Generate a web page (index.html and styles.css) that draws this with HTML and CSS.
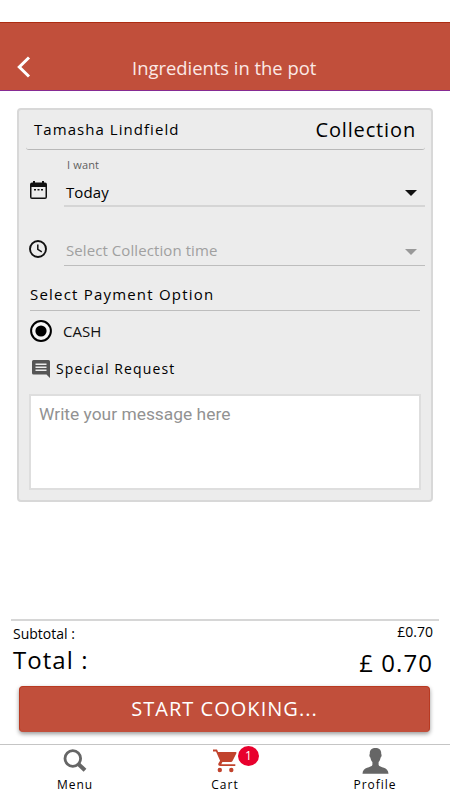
FILE: index.html
```html
<!DOCTYPE html>
<html lang="en">
<head>
<meta charset="utf-8">
<title>Ingredients in the pot</title>
<link rel="stylesheet" href="styles.css">
</head>
<body>
<div class="app">
  <header class="header">
    <svg class="back" width="14" height="22" viewBox="0 0 14 22"><path d="M12 1.500 2.300 11l9.700 9.500" fill="none" stroke="#fff" stroke-width="3"/></svg>
    <h1 class="title">Ingredients in the pot</h1>
  </header>
  <main class="card">
    <div class="customer"><span class="name">Tamasha Lindfield</span><span class="mode">Collection</span></div>
    <div class="field">
      <svg class="field-icon calendar" width="17" height="18" viewBox="0 0 17 18"><path fill="#111" fill-rule="evenodd" d="M3 0h2v1.500h7V0h2v1.500h1a2 2 0 0 1 2 2V16a2 2 0 0 1-2 2H2a2 2 0 0 1-2-2V3.500a2 2 0 0 1 2-2h1zM1.500 6v10.500h14V6zM4 8h2v1.500H4zm3.500 0h2v1.500h-2zm3.500 0h2v1.500h-2z"/></svg>
      <div class="select">
        <span class="label">I want</span>
        <span class="value">Today</span>
        <svg class="caret" width="12" height="6" viewBox="0 0 12 6"><path d="M0 0h12L6 6z" fill="#111"/></svg>
      </div>
    </div>
    <div class="field time">
      <svg class="field-icon" width="18" height="18" viewBox="0 0 18 18" fill="none" stroke="#111"><circle cx="9" cy="9" r="8" stroke-width="1.900"/><path d="M8.800 4.400v5l4 2.400" stroke-width="1.500"/></svg>
      <div class="select">
        <span class="value muted">Select Collection time</span>
        <svg class="caret" width="12" height="6" viewBox="0 0 12 6"><path d="M0 0h12L6 6z" fill="#999"/></svg>
      </div>
    </div>
    <h2 class="payment"><span>Select Payment Option</span></h2>
    <div class="option">
      <svg width="22" height="22" viewBox="0 0 22 22"><circle cx="11" cy="11" r="9.900" fill="#f6f6f6" stroke="#000" stroke-width="2"/><circle cx="11" cy="11" r="5.600"/></svg>
      <span class="cash">CASH</span>
    </div>
    <div class="request">
      <svg width="18" height="18" viewBox="0 0 18 18"><path fill="#555" d="M1.500 0h15A1.500 1.500 0 0 1 18 1.500V18l-3.500-3.500h-13A1.500 1.500 0 0 1 0 13V1.500A1.500 1.500 0 0 1 1.500 0z"/><path d="M3.500 4.200h11M3.500 7.200h11M3.500 10.200h11" stroke="#ececec" stroke-width="1.400"/></svg>
      <span class="special">Special Request</span>
    </div>
    <div class="message"><span class="placeholder">Write your message here</span></div>
  </main>
  <section class="summary">
    <div class="totals">
      <div class="left"><span class="sub">Subtotal :</span><span class="total">Total :</span></div>
      <div class="right"><span class="subvalue">£0.70</span><span class="totalvalue">£ 0.70</span></div>
    </div>
    <button class="cook"><span>START COOKING...</span></button>
  </section>
  <nav class="tabs">
    <div class="tab">
      <svg width="24" height="24" viewBox="0 0 24 24" fill="none" stroke="#666"><circle cx="9.800" cy="9.500" r="7.800" stroke-width="2.800"/><path d="M15.300 15 22 21.300" stroke-width="4"/></svg>
      <span class="menu">Menu</span>
    </div>
    <div class="tab">
      <svg width="24" height="24" viewBox="0 0 24 24"><g fill="#c1432d"><path d="M0 .5h4l1.100 2.500h17.500c.7 0 1.100.5.800 1.200L19.500 12c-.3.600-.9 1-1.600 1H9.400l-1.100 2.200h14v1.700H7.200c-1.600 0-2.400-1.300-1.700-2.600l1.600-2.600L3 2.400H0z"/><circle cx="6.800" cy="21" r="2.200"/><circle cx="18.300" cy="21" r="2.200"/></g></svg>
      <span class="badge">1</span>
      <span class="cart">Cart</span>
    </div>
    <div class="tab">
      <svg class="person" width="27" height="26" viewBox="0 0 27 26"><path fill="#666" d="M13.500 0c3.700 0 6 2 5.700 6 .7.500.5 3-.6 3.500-.4 2.200-1 3.400-2 4.500v3c1 3 9.800 1.500 9.900 8.800H.5C.6 18.500 9.400 20 10.400 17v-3c-1-1.100-1.600-2.300-2-4.500C7.300 9 7.100 6.500 7.800 6 7.500 2 9.800 0 13.500 0z"/></svg>
      <span class="profile">Profile</span>
    </div>
  </nav>
</div>
</body>
</html>
```
FILE: styles.css
```css
* { box-sizing: border-box; }
body { margin: 0; background: #fff; color: #000; font-family: "Open Sans", sans-serif; }
span { white-space: nowrap; }
svg { display: block; flex: none; }
.app { width: 450px; height: 800px; padding-top: 22px; display: flex; flex-direction: column; overflow: hidden; }
.header { height: 69px; flex: none; background: #c14f3b; border-top: 1px solid #ad2c12; border-bottom: 1px solid #862b94; display: grid; grid-template-columns: 132px 1fr; padding-top: 33px; }
.back { margin: 0 0 0 17px; }
.title { margin: 0; font-size: 18.400px; line-height: 24px; font-weight: 400; color: #fbe9e6; white-space: nowrap; }
.card { width: 416px; height: 394px; flex: none; margin: 17px 0 0 17px; background: #ececec; border: 2px solid #d8d8d8; border-radius: 4px; }
.customer { height: 40px; margin: 0 6px 0 7px; padding: 0 9px 2px 8px; border-bottom: 1px solid #b8b8b8; border-radius: 3px; display: flex; align-items: center; justify-content: space-between; }
.name { font-size: 15px; letter-spacing: 1.050px; }
.mode { font-size: 20px; letter-spacing: .850px; margin-top: 1px; }
.field { height: 57px; display: grid; grid-template-columns: 45px 361px; }
.field-icon { margin: 31px 0 0 10px; }
.calendar { margin-left: 11px; }
.select { display: grid; grid-template-columns: 1fr 12px; grid-template-rows: 20px 27px; padding: 6px 8px 0 2px; border-bottom: 2px solid #d5d5d5; align-items: start; }
.label { grid-column: 1 / 3; font-size: 11px; line-height: 17px; color: #606060; letter-spacing: .150px; margin-left: 1px; }
.value { font-size: 15px; line-height: 32px; letter-spacing: .100px; }
.caret { margin-top: 14px; }
.time { height: 58px; }
.time .field-icon { margin-top: 33px; }
.time .select { grid-template-rows: 30px; padding-top: 28px; border-bottom: 1px solid #bdbdbd; margin-bottom: 1px; }
.muted { color: #a0a0a0; letter-spacing: .080px; line-height: 31px; }
.payment { margin: 0 11px; height: 46px; border-bottom: 1px solid #bdbdbd; padding-top: 17px; font-size: 15px; line-height: 24px; font-weight: 400; letter-spacing: 1.200px; }
.option { display: flex; align-items: center; gap: 11px; height: 40px; padding-left: 11px; }
.cash { font-size: 15px; color: #111; }
.request { display: flex; align-items: center; gap: 6px; height: 36px; padding-left: 13px; }
.special { font-size: 14px; letter-spacing: 1.130px; margin-top: -1px; }
.message { height: 96px; margin: 7px 10px 0 10px; border: 2px solid #dedede; background: #fff; padding: 6px 8px; font: 17.400px/24px Roboto, sans-serif; color: #929292; }
.summary { margin: 117px 11px 0; height: 125px; flex: none; border-top: 2px solid #d6d6d6; }
.totals { height: 65px; display: flex; justify-content: space-between; padding: 0 5px 0 2px; }
.left, .right { display: flex; flex-direction: column; }
.right { align-items: flex-end; }
.sub { font-size: 14px; line-height: 20px; margin-top: 3px; }
.total { font-size: 24px; line-height: 32px; letter-spacing: 1.050px; }
.subvalue { font-size: 14px; line-height: 20px; margin: 1px 1px 0 0; }
.totalvalue { font-size: 24px; line-height: 34px; margin: 4px 1px 0 0; letter-spacing: 1.050px; }
.cook { display: block; width: 411px; height: 46px; margin: 0 0 0 8px; padding: 0; border: 1px solid #b83a22; border-bottom-color: #c14f3b; border-radius: 4px; background: #c14f3b; box-shadow: 0 2px 4px #0006; color: #fff; font: 20px/44px "Open Sans", sans-serif; letter-spacing: 1.030px; }
.tabs { height: 56px; flex: none; border-top: 1px solid #c5c5c5; display: grid; grid-template-columns: repeat(3, 1fr); }
.tab { position: relative; display: flex; flex-direction: column; align-items: center; padding-top: 4px; font-size: 12px; line-height: 18px; letter-spacing: 1px; }
.tab > span:last-child { margin-top: 3px; }
.tab .person { margin-top: -1px; margin-bottom: -1px; }
.badge { position: absolute; left: 88px; top: 1px; width: 21px; height: 20px; border-radius: 50%; background: #e8002d; color: #fff; text-align: center; line-height: 20px; letter-spacing: 0; }
```
